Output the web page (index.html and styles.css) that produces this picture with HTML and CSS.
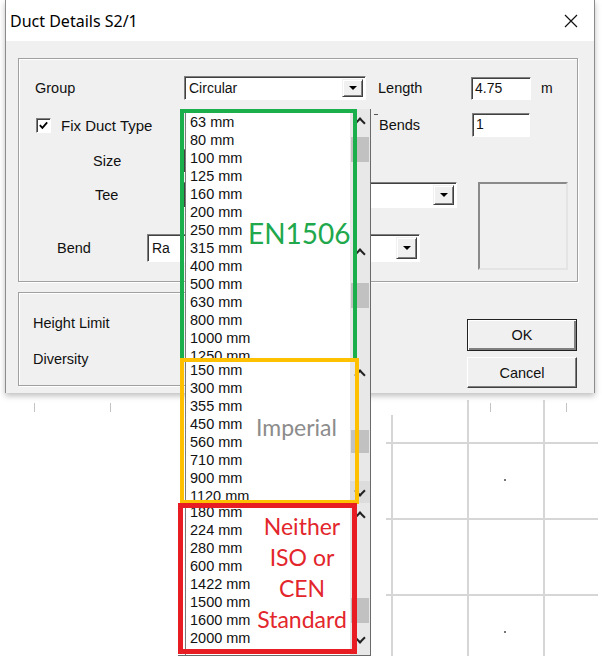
FILE: index.html
```html
<!DOCTYPE html>
<html lang="en">
<head>
  <meta charset="UTF-8" />
  <title>Duct Details S2/1</title>
  <link rel="stylesheet" href="styles.css">
</head>
<body>
  <div class="screen">
    <!-- Dialog -->
    <div class="window">
      <div class="titlebar">
        <span class="title">Duct Details S2/1</span>
        <svg class="close" viewBox="0 0 14 14"><path d="M1 1L13 13M13 1L1 13" stroke="#111" stroke-width="1.2" fill="none"/></svg>
      </div>
      <div class="client">
        <div class="group main">
          <div class="row r1">
            <span class="lbl l-group">Group</span>
            <div class="combo c-group"><span class="val">Circular</span><span class="arrow"></span></div>
            <span class="lbl l-right">Length</span>
            <div class="edit e-len">4.75</div>
            <span class="unit">m</span>
          </div>
          <div class="row r2">
            <div class="fix">
              <span class="check"><svg viewBox="0 0 12 12"><path d="M2 5.5L4.8 8.5L10 2.5" stroke="#000" stroke-width="2" fill="none"/></svg></span>
              <span class="fix-text">Fix Duct Type</span>
            </div>
            <span class="lbl l-right l-bends">Bends</span>
            <div class="edit e-bends">1</div>
          </div>
          <div class="row r3">
            <span class="lbl l-size">Size</span>
            <div class="combo c-size"><span class="val"></span><span class="arrow"></span></div>
          </div>
          <div class="row r4">
            <span class="lbl l-tee">Tee</span>
            <div class="combo c-tee"><span class="val"></span><span class="arrow"></span></div>
            <div class="pic"></div>
          </div>
          <div class="row r5">
            <span class="lbl l-bend">Bend</span>
            <div class="combo c-bend"><span class="val">Ra</span><span class="arrow"></span></div>
          </div>
        </div>
        <div class="lower">
          <div class="group limits">
            <p class="lbl">Height Limit</p>
            <p class="lbl">Diversity</p>
          </div>
          <div class="buttons">
            <button class="btn default">OK</button>
            <button class="btn">Cancel</button>
          </div>
        </div>
      </div>
    </div>

    <!-- Drawing area behind the dialog -->
    <div class="below">
      <div class="canvas">
        <span class="dot d1"></span>
        <span class="dot d2"></span>
      </div>
    </div>
    <div class="band"></div>

    <!-- Size drop-down lists, annotated -->
    <div class="dropdown">
      <div class="seg seg-en">
        <ul class="list">
          <li>63 mm</li><li>80 mm</li><li>100 mm</li><li>125 mm</li><li>160 mm</li>
          <li>200 mm</li><li>250 mm</li><li>315 mm</li><li>400 mm</li><li>500 mm</li>
          <li>630 mm</li><li>800 mm</li><li>1000 mm</li><li>1250 mm</li>
        </ul>
        <div class="sb">
          <span class="up"></span>
          <span class="thumb t-en1"></span>
          <span class="up u-en2"></span>
          <span class="thumb t-en2"></span>
        </div>
      </div>
      <div class="seg seg-imp">
        <ul class="list">
          <li>150 mm</li><li>300 mm</li><li>355 mm</li><li>450 mm</li>
          <li>560 mm</li><li>710 mm</li><li>900 mm</li><li>1120 mm</li>
        </ul>
        <div class="sb">
          <span class="up u-imp"></span>
          <span class="thumb t-imp"></span>
          <span class="down d-imp"></span>
        </div>
      </div>
      <div class="seg seg-other">
        <ul class="list">
          <li>180 mm</li><li>224 mm</li><li>280 mm</li><li>600 mm</li>
          <li>1422 mm</li><li>1500 mm</li><li>1600 mm</li><li>2000 mm</li>
        </ul>
        <div class="sb">
          <span class="up"></span>
          <span class="thumb t-other"></span>
          <span class="down d-other"></span>
        </div>
      </div>

      <div class="frame f-en"><span class="note">EN1506</span></div>
      <div class="frame f-imp"><span class="note">Imperial</span></div>
      <div class="frame f-other"><span class="note">Neither<br>ISO or<br>CEN<br>Standard</span></div>
    </div>
  </div>
</body>
</html>
```

FILE: styles.css
```css
* {
  box-sizing: border-box;
  margin: 0;
  padding: 0;
}

body {
  font-family: 'Liberation Sans', Arial, sans-serif;
  font-size: 14px;
  color: #111;
  background: #fff;
}

.screen {
  position: relative;
  width: 602px;
  height: 669px;
  overflow: hidden;
  background: #fff;
}

/* === DIALOG === */
.window {
  position: relative;
  z-index: 1;
  margin-left: 5px;
  width: 590px;
  height: 393px;
  background: #f0f0f0;
  border-left: 1px solid #8c8c8c;
  border-right: 1px solid #8c8c8c;
  box-shadow: 0 3px 6px rgba(0,0,0,0.25);
}

.titlebar {
  height: 41px;
  background: #fff;
  display: flex;
  align-items: center;
  justify-content: space-between;
  padding: 0 16px 0 4px;
}

.title {
  font-family: 'Noto Sans', sans-serif;
  font-size: 16px;
  color: #000;
}

.close {
  width: 14px;
  height: 14px;
}

.client {
  padding: 17px 0 0 12px;
}

.group {
  border: 1px solid #a0a0a0;
  box-shadow: inset 1px 1px #fff, 1px 1px #fff;
}

.main {
  width: 560px;
  height: 224px;
}

.row {
  display: flex;
  align-items: center;
}

.r1 { margin-top: 17px; height: 24px; }
.r2 { margin-top: 13px; height: 24px; }
.r3 { margin-top: 12px; height: 24px; }
.r4 { margin-top: 9px; height: 26px; }
.r5 { margin-top: 26px; height: 28px; }

.lbl { font-size: 14.5px; }

.l-group { margin-left: 16px; width: 149px; }
.l-right { margin-left: 12px; width: 93px; }
.l-size { margin-left: 74px; width: 90px; }
.l-tee { margin-left: 76px; width: 88px; }
.l-bend { margin-left: 38px; width: 90px; }

.l-bends {
  position: relative;
}

/* small corner mark left of "Bends" */
.l-bends::before {
  content: "";
  position: absolute;
  left: -5px;
  top: -3px;
  width: 4px;
  height: 1px;
  background: #555;
}

.unit { margin-left: 10px; }

.fix {
  display: flex;
  align-items: center;
  margin-left: 17px;
  width: 331px;
}

.fix-text { margin-left: 10px; font-size: 15px; }

.check {
  display: flex;
  width: 15px;
  height: 15px;
  background: #fff;
  border: 1px solid;
  border-color: #808080 #fff #fff #808080;
  box-shadow: inset 1px 1px #404040;
  padding: 1px;
}

/* sunken fields */
.combo, .edit {
  background: #fff;
  border: 1px solid;
  border-color: #808080 #fff #fff #808080;
  box-shadow: inset 1px 1px #404040;
}

.combo {
  display: flex;
  align-items: center;
  height: 100%;
  padding: 2px 2px 2px 4px;
}

.combo .val { flex: 1; }

.c-group { width: 182px; }
.c-size { width: 165px; }
.c-tee { width: 274px; }
.c-bend { width: 273px; }

.arrow {
  align-self: stretch;
  width: 21px;
  display: flex;
  align-items: center;
  justify-content: center;
  background: #f0f0f0;
  border: 1px solid;
  border-color: #f0f0f0 #404040 #404040 #f0f0f0;
  box-shadow: inset 1px 1px #fff, inset -1px -1px #808080;
}

.arrow::before {
  content: "";
  border-left: 4px solid transparent;
  border-right: 4px solid transparent;
  border-top: 4px solid #000;
}

.edit {
  height: 23px;
  padding: 2px 3px;
  line-height: 17px;
}

.e-len { width: 60px; }
.e-bends { width: 58px; height: 24px; }

.pic {
  align-self: flex-start;
  margin-left: 21px;
  width: 90px;
  height: 88px;
  border: 2px solid;
  border-color: #8a8a8a #e4e4e4 #e4e4e4 #8a8a8a;
}

.lower {
  display: flex;
  margin-top: 10px;
}

.limits {
  width: 352px;
  height: 94px;
  padding: 21px 0 0 14px;
}

.limits .lbl {
  line-height: 18px;
  margin-bottom: 18px;
}

.buttons {
  display: flex;
  flex-direction: column;
  gap: 6px;
  margin: 27px 0 0 97px;
}

.btn {
  font: inherit;
  font-size: 14.5px;
  color: #111;
  width: 110px;
  height: 31px;
  background: #f0f0f0;
  border: 1px solid;
  border-color: #fff #404040 #404040 #fff;
  box-shadow: inset -1px -1px #808080;
}

.btn.default {
  height: 32px;
  border-color: #222;
  box-shadow: inset 1px 1px #fff, inset -2px -2px #808080;
}

/* === DRAWING AREA === */
.below {
  height: 269px;
  background:
    linear-gradient(#c4c4c4, #c4c4c4) 34px 3px / 1px 9px no-repeat,
    linear-gradient(#c4c4c4, #c4c4c4) 110px 3px / 1px 9px no-repeat,
    linear-gradient(#c4c4c4, #c4c4c4) 388px 3px / 1px 9px no-repeat,
    linear-gradient(#c4c4c4, #c4c4c4) 490px 3px / 1px 9px no-repeat,
    linear-gradient(#c4c4c4, #c4c4c4) 566px 3px / 1px 9px no-repeat;
}

.canvas {
  position: relative;
  margin: 7px 0 0 386px;
  width: 212px;
  height: 256px;
  background:
    linear-gradient(#fff, #fff) 0 0 / 10px 15px no-repeat,
    repeating-linear-gradient(to right, transparent 0 5px, #d6d6d6 5px 7px, transparent 7px 76px),
    repeating-linear-gradient(to bottom, transparent 0 42px, #d6d6d6 42px 44px, transparent 44px 76px);
}

.dot {
  position: absolute;
  width: 2px;
  height: 2px;
  background: #777;
}

.d1 { left: 118px; top: 79px; }
.d2 { left: 118px; top: 231px; }

.band {
  height: 7px;
  background: #edf4fb;
}

/* === DROP-DOWN LISTS === */
.dropdown {
  position: absolute;
  z-index: 5;
  left: 178px;
  top: 109px;
  width: 193px;
}

.seg {
  display: flex;
  overflow: hidden;
}

.seg-en { height: 251px; }
.seg-imp { height: 143px; }
.seg-other { height: 153px; border-bottom: 1px solid #6a6a6a; }

.list {
  list-style: none;
  flex: 1;
  margin-left: 7px;
  padding-left: 4px;
  background: #fff;
  border-left: 1px solid #7a7a7a;
  line-height: 18px;
  font-size: 14.5px;
  color: #111;
}

.seg-en .list { padding-top: 4px; }
.seg-imp .list { padding-top: 1px; }

.sb {
  width: 21px;
  display: flex;
  flex-direction: column;
  background: #e8e8e8;
  border-right: 1px solid #6a6a6a;
}

.up, .down {
  height: 24px;
  flex-shrink: 0;
  display: flex;
  align-items: center;
  justify-content: center;
}

.up::before, .down::before {
  content: "";
  width: 6px;
  height: 6px;
  border: 0 solid #222;
}

.up::before {
  border-top-width: 2px;
  border-left-width: 2px;
  transform: translateY(2px) rotate(45deg);
}

.down::before {
  border-bottom-width: 2px;
  border-right-width: 2px;
  transform: translateY(-2px) rotate(45deg);
}

.thumb {
  flex-shrink: 0;
  height: 25px;
  margin: 0 1px;
  background: #c1c1c1;
}

.t-en1 { margin-top: 4px; }
.u-en2 { margin-top: 78px; }
.t-en2 { margin-top: 19px; }

.u-imp { margin-top: 1px; }
.t-imp { margin-top: 45px; height: 23px; }
.d-imp { margin-top: 28px; background: #dcdcdc; }

.t-other { margin-top: 71px; }
.d-other { margin-top: 5px; }

/* annotation frames */
.frame {
  position: absolute;
}

.f-en {
  left: 2px;
  top: 0;
  width: 177px;
  height: 253px;
  border: 4px solid #1aaf4b;
}

.f-imp {
  left: 2px;
  top: 249px;
  width: 179px;
  height: 146px;
  border: 4px solid #ffc000;
}

.f-other {
  left: 0;
  top: 394px;
  width: 179px;
  height: 151px;
  border: 5px solid #e81c23;
}

.note {
  position: absolute;
  font-family: Lato, 'Open Sans', sans-serif;
  line-height: 1;
}

.f-en .note {
  left: 64px;
  top: 106px;
  font-size: 28px;
  color: #21a84d;
}

.f-imp .note {
  left: 72px;
  top: 54px;
  font-size: 23px;
  color: #8c8c8c;
}

.f-other .note {
  left: 72px;
  top: 3px;
  width: 94px;
  text-align: center;
  font-size: 23px;
  line-height: 31px;
  color: #e3262c;
}
```
